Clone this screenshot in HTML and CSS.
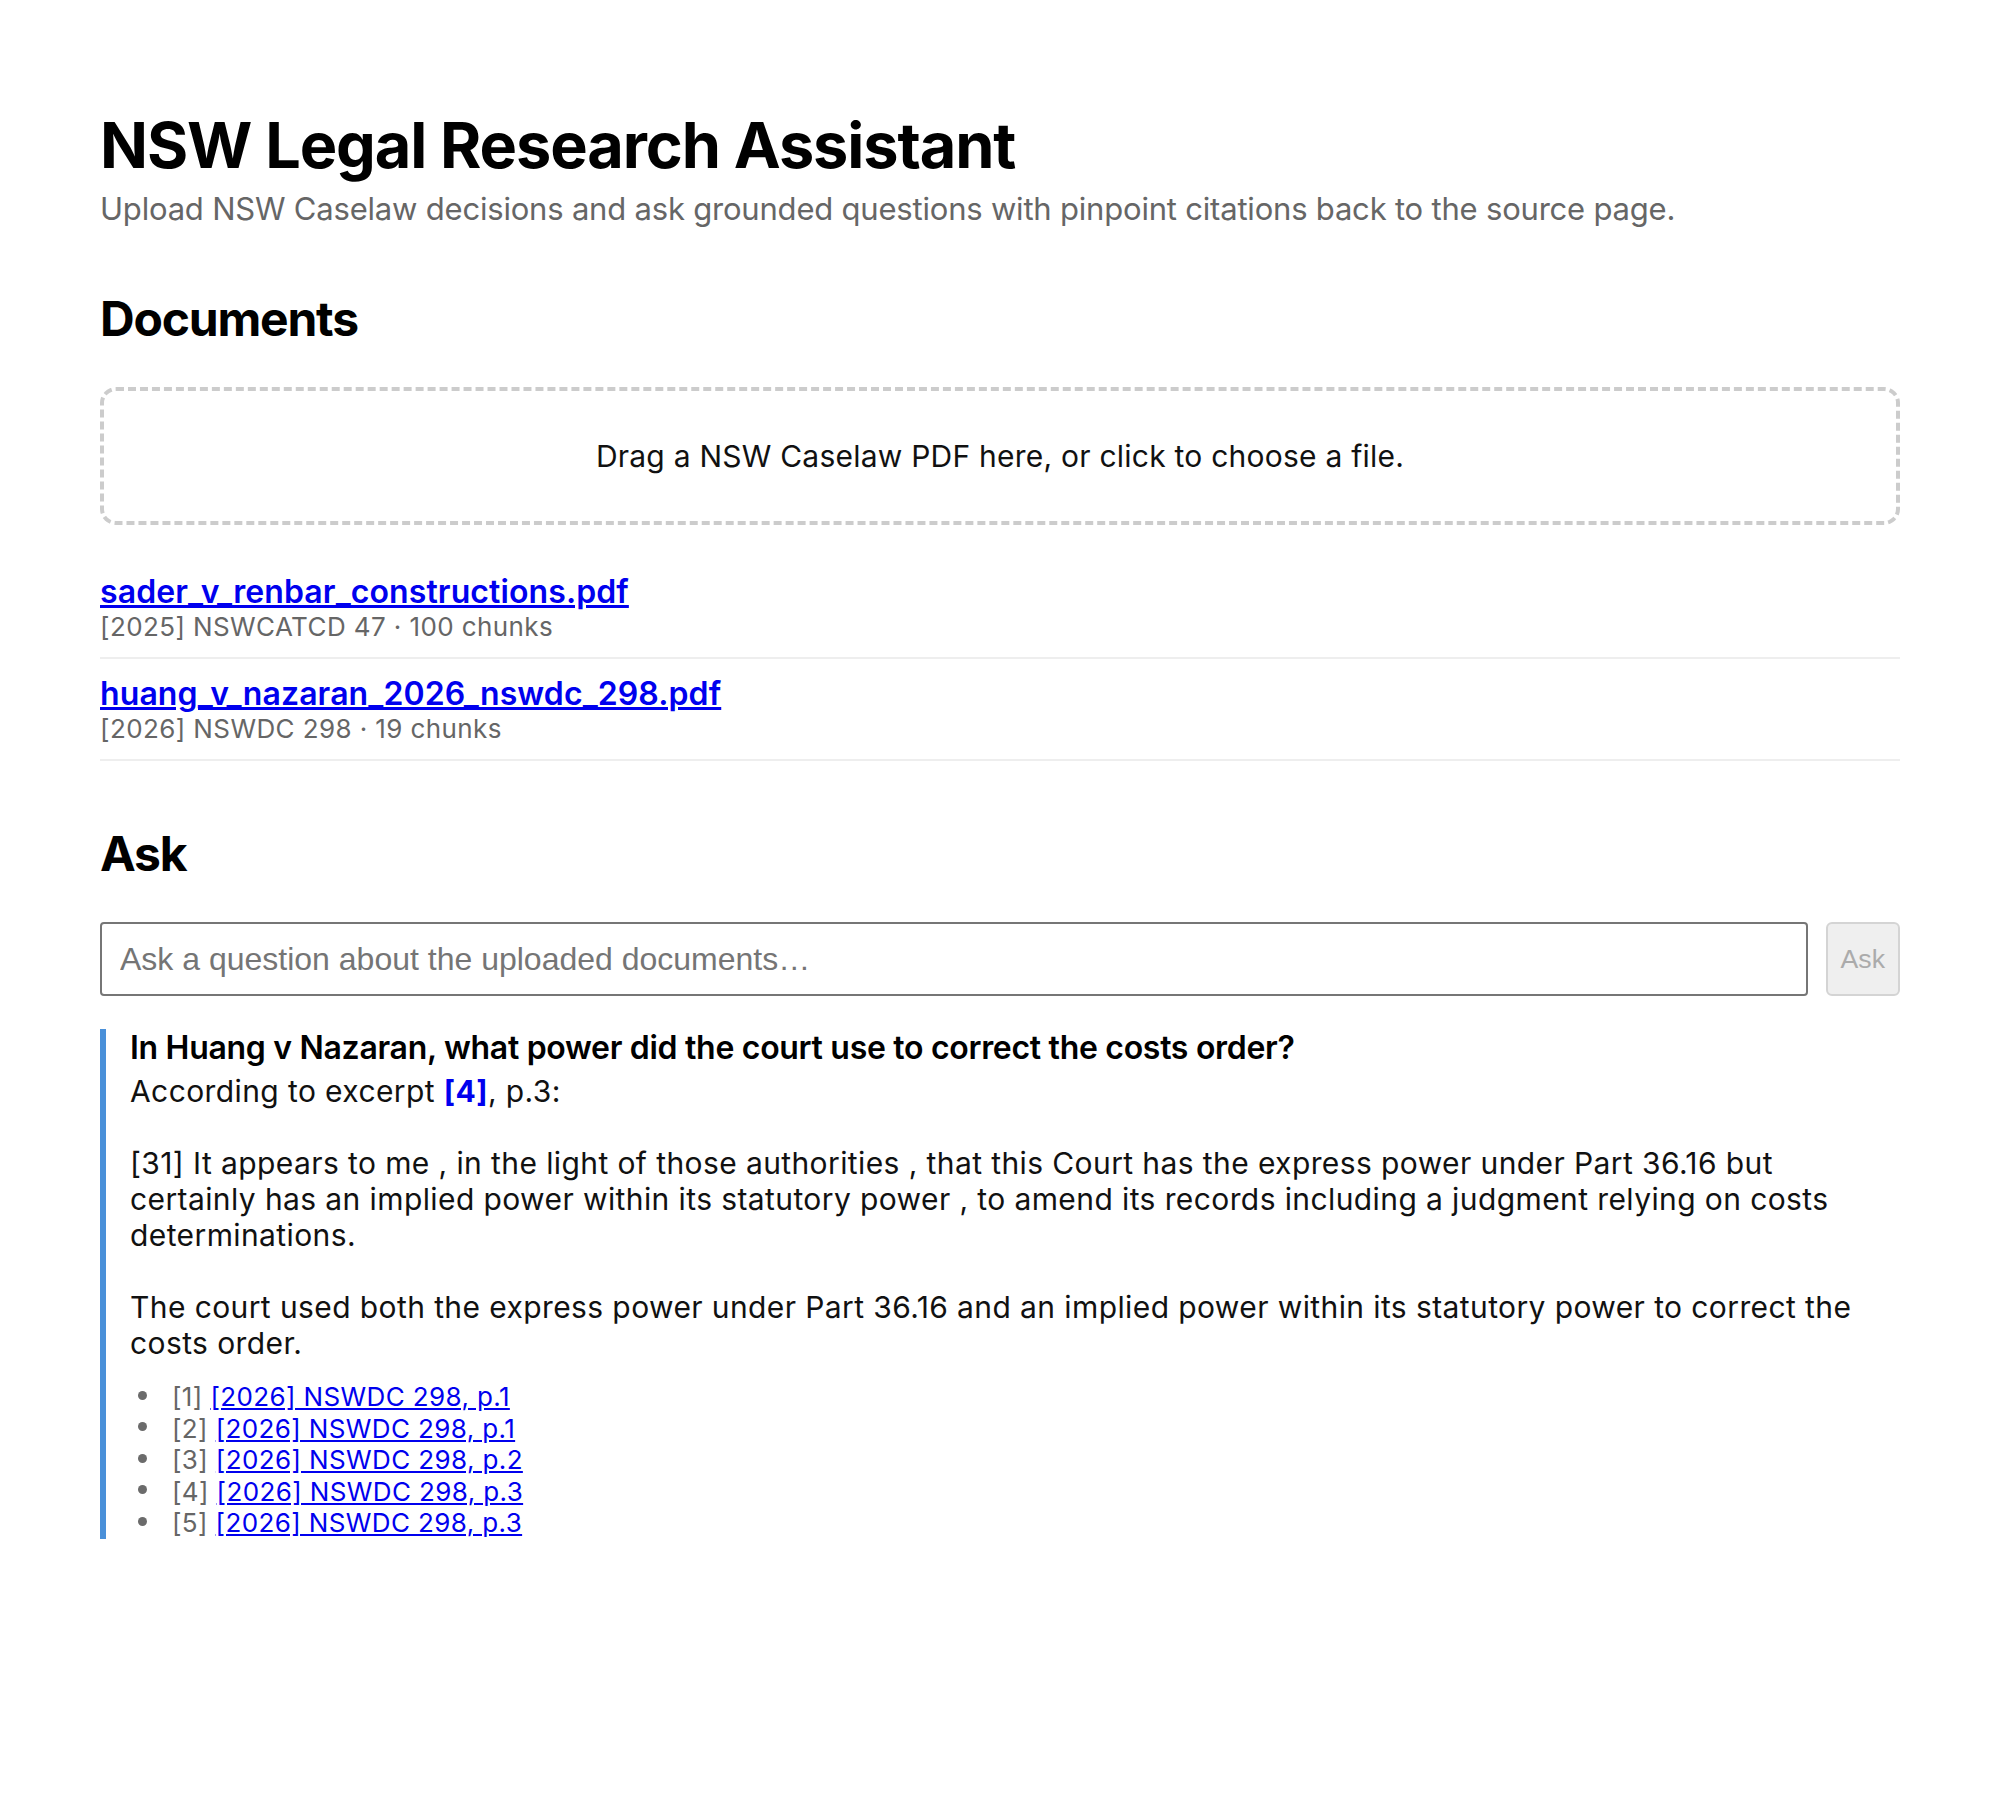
FILE: index.html
```html
<!DOCTYPE html>
<html lang="en">
<head>
<meta charset="utf-8">
<title>NSW Legal Research Assistant</title>
<link rel="stylesheet" href="styles.css">
</head>
<body>
<main class="app">
  <header class="masthead">
    <h1 class="title">NSW Legal Research Assistant</h1>
    <p class="subtitle">Upload NSW Caselaw decisions and ask grounded questions with pinpoint citations back to the source page.</p>
  </header>

  <section class="section">
    <h2 class="section-title">Documents</h2>
    <div class="dropzone">Drag a NSW Caselaw PDF here, or click to choose a file.</div>
    <ul class="doc-list">
      <li class="doc-item">
        <a class="doc-link" href="#">sader_v_renbar_constructions.pdf</a>
        <div class="doc-meta">[2025] NSWCATCD 47 · 100 chunks</div>
      </li>
      <li class="doc-item">
        <a class="doc-link" href="#">huang_v_nazaran_2026_nswdc_298.pdf</a>
        <div class="doc-meta">[2026] NSWDC 298 · 19 chunks</div>
      </li>
    </ul>
  </section>

  <section class="section section-ask">
    <h2 class="section-title">Ask</h2>
    <form class="ask-row">
      <input class="ask-input" type="text" placeholder="Ask a question about the uploaded documents…">
      <button class="ask-button" type="button" disabled>Ask</button>
    </form>

    <article class="answer">
      <div class="question">In Huang v Nazaran, what power did the court use to correct the costs order?</div>
      <div class="answer-text">According to excerpt <span class="cite">[4]</span>, p.3:

[31] It appears to me , in the light of those authorities , that this Court has the express power under Part 36.16 but certainly has an implied power within its statutory power , to amend its records including a judgment relying on costs determinations.

The court used both the express power under Part 36.16 and an implied power within its statutory power to correct the costs order.</div>
      <ul class="sources">
        <li class="source">[1] <a href="#">[2026] NSWDC 298, p.1</a></li>
        <li class="source">[2] <a href="#">[2026] NSWDC 298, p.1</a></li>
        <li class="source">[3] <a href="#">[2026] NSWDC 298, p.2</a></li>
        <li class="source">[4] <a href="#">[2026] NSWDC 298, p.3</a></li>
        <li class="source">[5] <a href="#">[2026] NSWDC 298, p.3</a></li>
      </ul>
    </article>
  </section>
</main>
</body>
</html>
```

FILE: styles.css
```css
html, body {
  margin: 0;
  padding: 0;
  background: #ffffff;
}

body {
  font-family: Inter, "Noto Sans", "Liberation Sans", sans-serif;
  color: #111111;
}

.app {
  width: 1800px;
  margin: 0 auto;
  padding: 107px 0 120px;
}

.title {
  margin: 0 0 7px;
  font-size: 63px;
  line-height: 76px;
  font-weight: 700;
  letter-spacing: -1.1px;
  color: #000000;
}

.subtitle {
  margin: 0;
  font-size: 31px;
  line-height: 38px;
  letter-spacing: -0.2px;
  color: #666666;
}

.section {
  margin-top: 62px;
}

.section-ask {
  margin-top: 64px;
}

.section-title {
  margin: 0 0 40px;
  font-size: 48px;
  line-height: 57px;
  font-weight: 700;
  letter-spacing: -1.2px;
  color: #000000;
}

.dropzone {
  border: 4px dashed #cccccc;
  border-radius: 16px;
  padding: 47px 0;
  font-size: 30px;
  line-height: 36px;
  letter-spacing: 0.23px;
  text-align: center;
  color: #111111;
}

.doc-list {
  list-style: none;
  margin: 32px 0 0;
  padding: 0;
}

.doc-item {
  padding: 16px 0 15px;
  border-bottom: 2px solid #eeeeee;
}

.doc-link {
  display: inline-block;
  font-size: 32px;
  line-height: 38px;
  font-weight: 600;
  letter-spacing: 0.1px;
  color: #0000ee;
  text-decoration: underline;
}

.doc-meta {
  font-size: 26px;
  line-height: 31px;
  letter-spacing: 0.4px;
  color: #666666;
}

.ask-row {
  display: flex;
  gap: 18px;
  margin: 0;
}

.ask-input {
  flex: 1;
  height: 74px;
  box-sizing: border-box;
  padding: 0 18px;
  border: 2px solid #767676;
  border-radius: 4px;
  font-family: "Liberation Sans", Arial, sans-serif;
  font-size: 32px;
  color: #111111;
  background: #ffffff;
}

.ask-input::placeholder {
  color: #757575;
}

.ask-button {
  height: 74px;
  box-sizing: border-box;
  padding: 0 13px;
  border: 2px solid #d4d4d4;
  border-radius: 6px;
  background: #efefef;
  font-family: "Liberation Sans", Arial, sans-serif;
  font-size: 26.67px;
  color: #ababab;
}

.answer {
  margin-top: 33px;
  border-left: 6px solid #4a90d9;
  padding-left: 24px;
}

.question {
  font-size: 32px;
  line-height: 38px;
  font-weight: 600;
  letter-spacing: -0.3px;
  color: #000000;
  margin-bottom: 6px;
}

.answer-text {
  white-space: pre-wrap;
  font-size: 30px;
  line-height: 36px;
  letter-spacing: 0.4px;
  color: #111111;
}

.cite {
  color: #0000ee;
  font-weight: 700;
}

.sources {
  list-style: none;
  margin: 20px 0 0;
  padding-left: 42px;
  font-size: 26px;
  line-height: 31.5px;
  letter-spacing: 0.38px;
  color: #666666;
}

.source::before {
  content: "";
  display: inline-block;
  width: 9px;
  height: 9px;
  border-radius: 50%;
  background: #6b6b6b;
  margin-left: -34px;
  margin-right: 25px;
  vertical-align: 6.5px;
}

.sources a {
  color: #0000ee;
  text-decoration: underline;
}
```
